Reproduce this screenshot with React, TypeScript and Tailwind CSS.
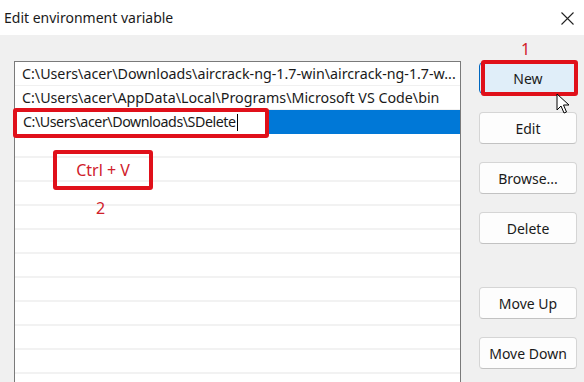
const font = { fontFamily: '"Noto Sans", "Open Sans", sans-serif' };

const rows = [
  "C:\\Users\\acer\\Downloads\\aircrack-ng-1.7-win\\aircrack-ng-1.7-w...",
  "C:\\Users\\acer\\AppData\\Local\\Programs\\Microsoft VS Code\\bin",
];

function Btn({ label, active }: { label: string; active?: boolean }) {
  return (
    <button
      className={
        active
          ? "h-[32px] w-[98px] rounded-[4px] border border-[#0067c0] bg-[#e0eef9] text-[14px] text-[#1a1a1a]"
          : "h-[32px] w-[98px] rounded-[4px] border border-[#d5d5d5] border-b-[#c2c2c2] bg-[#fdfdfd] text-[14px] text-[#1a1a1a]"
      }
    >
      {label}
    </button>
  );
}

export default function App() {
  return (
    <div className="relative h-[382px] w-[584px] overflow-hidden bg-[#f0f0f0]" style={font}>
      <div className="flex h-[35px] items-center justify-between bg-white pl-[4px] pr-[10px]">
        <span className="text-[14px] text-[#1a1a1a]">Edit environment variable</span>
        <svg width="13" height="13" viewBox="0 0 13 13" className="mt-[1px]">
          <path d="M0.5 0.5 L12.5 12.5 M12.5 0.5 L0.5 12.5" stroke="#222" strokeWidth="1.1" />
        </svg>
      </div>

      <div className="flex pl-[14px] pt-[26px]">
        <div className="relative h-[340px] w-[447px] border border-l-[1.5px] border-[#7a7a7a] bg-white">
          {rows.map((r) => (
            <div key={r} className="flex h-[24px] items-center border-b border-[#f0f0f0] pl-[7px] text-[14.25px] text-[#1a1a1a]">
              <span className="whitespace-nowrap">{r}</span>
            </div>
          ))}
          <div className="flex h-[24px] items-center bg-[#0078d7]">
            <div className="flex h-[24px] w-[252px] items-center bg-white pl-[8px] text-[14.25px] text-[#1a1a1a]">
              <span className="whitespace-nowrap tracking-[-0.45px]">C:\Users\acer\Downloads\SDelete</span>
              <span className="ml-[1px] h-[17px] w-[1px] bg-black" />
            </div>
          </div>
          {Array.from({ length: 10 }).map((_, i) => (
            <div key={i} className="h-[24px] border-b-2 border-[#f2f2f2]" />
          ))}

          <div className="absolute left-[-2px] top-[46px] h-[30px] w-[256px] rounded-[3px] border-[4px] border-[#e0101a]" />
          <div className="absolute left-[38px] top-[88px] flex h-[40px] w-[100px] items-center justify-center rounded-[3px] border-[4px] border-[#e0101a] text-[16px] text-[#d0202a]">
            Ctrl + V
          </div>
          <div className="absolute left-[81px] top-[134px] text-[16px] text-[#d0202a]">2</div>
        </div>

        <div className="relative ml-[18px] flex flex-col pt-[1px]">
          <div className="absolute left-[42px] top-[-22px] text-[16px] leading-[20px] text-[#d0202a]">1</div>
          <div className="relative">
            <Btn label="New" active />
            <div className="absolute left-[2px] top-[-2px] h-[36px] w-[97px] rounded-[3px] border-[4px] border-[#e0101a]" />
            <svg className="absolute left-[77px] top-[31px]" width="14" height="22" viewBox="0 0 14 22">
              <path d="M1 1 L1 17 L5 13 L8 20 L10.5 19 L7.5 12 L13 12 Z" fill="#fff" stroke="#000" strokeWidth="1" strokeLinejoin="round" />
            </svg>
          </div>
          <div className="mt-[18px]"><Btn label="Edit" /></div>
          <div className="mt-[18px]"><Btn label="Browse..." /></div>
          <div className="mt-[18px]"><Btn label="Delete" /></div>
          <div className="mt-[43px]"><Btn label="Move Up" /></div>
          <div className="mt-[18px]"><Btn label="Move Down" /></div>
        </div>
      </div>
    </div>
  );
}
